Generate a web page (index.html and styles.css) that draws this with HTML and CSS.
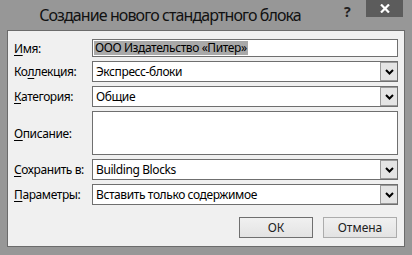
FILE: index.html
```html
<!DOCTYPE html>
<html lang="ru">
<head>
<meta charset="utf-8">
<link rel="stylesheet" href="styles.css">
</head>
<body>
<div class="window">
  <div class="titlebar">
    <div class="title">Создание нового стандартного блока</div>
    <div class="help">?</div>
    <div class="close">
      <svg width="10" height="9" viewBox="0 0 10 9"><path d="M1 0.5 L9 8.5 M9 0.5 L1 8.5" stroke="#fff" stroke-width="2.2" fill="none"/></svg>
    </div>
  </div>
  <div class="panel">
    <div class="form">
      <label class="lbl"><u>И</u>мя:</label>
      <div class="input"><span class="sel">ООО Издательство «Питер»</span></div>

      <label class="lbl">Ко<u>л</u>лекция:</label>
      <div class="select"><span class="val">Экспресс-блоки</span><span class="drop"><svg width="9" height="6" viewBox="0 0 9 6"><path d="M1 1 L4.5 4.5 L8 1" stroke="#000" stroke-width="2" fill="none"/></svg></span></div>

      <label class="lbl"><u>К</u>атегория:</label>
      <div class="select"><span class="val">Общие</span><span class="drop"><svg width="9" height="6" viewBox="0 0 9 6"><path d="M1 1 L4.5 4.5 L8 1" stroke="#000" stroke-width="2" fill="none"/></svg></span></div>

      <label class="lbl"><u>О</u>писание:</label>
      <div class="textarea"></div>

      <label class="lbl"><u>С</u>охранить в:</label>
      <div class="select"><span class="val">Building Blocks</span><span class="drop"><svg width="9" height="6" viewBox="0 0 9 6"><path d="M1 1 L4.5 4.5 L8 1" stroke="#000" stroke-width="2" fill="none"/></svg></span></div>

      <label class="lbl"><u>П</u>араметры:</label>
      <div class="select"><span class="val">Вставить только содержимое</span><span class="drop"><svg width="9" height="6" viewBox="0 0 9 6"><path d="M1 1 L4.5 4.5 L8 1" stroke="#000" stroke-width="2" fill="none"/></svg></span></div>
    </div>
    <div class="buttons">
      <div class="btn default">ОК</div>
      <div class="btn">Отмена</div>
    </div>
  </div>
</div>
</body>
</html>
```

FILE: styles.css
```css
* { box-sizing: border-box; }
html, body { margin: 0; padding: 0; }
body {
  width: 412px;
  height: 255px;
  overflow: hidden;
  font-family: "Noto Sans", "Open Sans", sans-serif;
  background: #979797;
}
.window {
  width: 412px;
  height: 255px;
  background: #979797;
  display: flex;
  flex-direction: column;
}
.titlebar {
  height: 30px;
  display: flex;
  position: relative;
}
.title {
  width: 340px;
  text-align: center;
  font-size: 16px;
  line-height: 31px;
  color: #111;
  letter-spacing: -0.9px;
}
.help {
  position: absolute;
  left: 344px;
  top: 2px;
  font-size: 14px;
  font-weight: bold;
  color: #222;
}
.close {
  position: absolute;
  left: 366px;
  top: 0;
  width: 37px;
  height: 17px;
  background: #5c5c5c;
  display: flex;
  align-items: center;
  justify-content: center;
}
.panel {
  margin: 0 7px 8px 7px;
  flex: 1;
  background: #f0f0f0;
  border: 1px solid #6b6b6b;
  padding: 8px 6px 0 6px;
  display: flex;
  flex-direction: column;
}
.form {
  display: grid;
  grid-template-columns: 78px 1fr;
  grid-template-rows: 18px 21px 21px 44px 21px 21px;
  row-gap: 4px;
  align-items: center;
}
.lbl {
  font-size: 12px;
  color: #000;
  letter-spacing: -0.4px;
}
.lbl u { text-decoration: underline; text-underline-offset: 2px; }
.input, .select, .textarea {
  height: 100%;
  background: #fff;
  border: 1px solid #6f6f6f;
  font-size: 12px;
  color: #000;
  display: flex;
  align-items: center;
  letter-spacing: -0.4px;
}
.input { padding-left: 1px; }
.sel {
  background: #a9a9a9;
  line-height: 14px;
  padding: 0 1px;
}
.select { padding-left: 3px; justify-content: space-between; }
.drop {
  width: 17px;
  height: 19px;
  background: #e4e4e4;
  border: 1px solid #9a9a9a;
  border-right: 0;
  display: flex;
  align-items: center;
  justify-content: center;
}
.buttons {
  display: flex;
  justify-content: flex-end;
  gap: 10px;
  margin-top: 12px;
  padding-right: 1px;
}
.btn {
  width: 74px;
  height: 21px;
  border: 1px solid #acacac;
  background: linear-gradient(#f0f0f0, #e3e3e3);
  font-size: 12px;
  color: #222;
  display: flex;
  align-items: center;
  justify-content: center;
}
.btn.default { border-color: #6f6f6f; }
```
